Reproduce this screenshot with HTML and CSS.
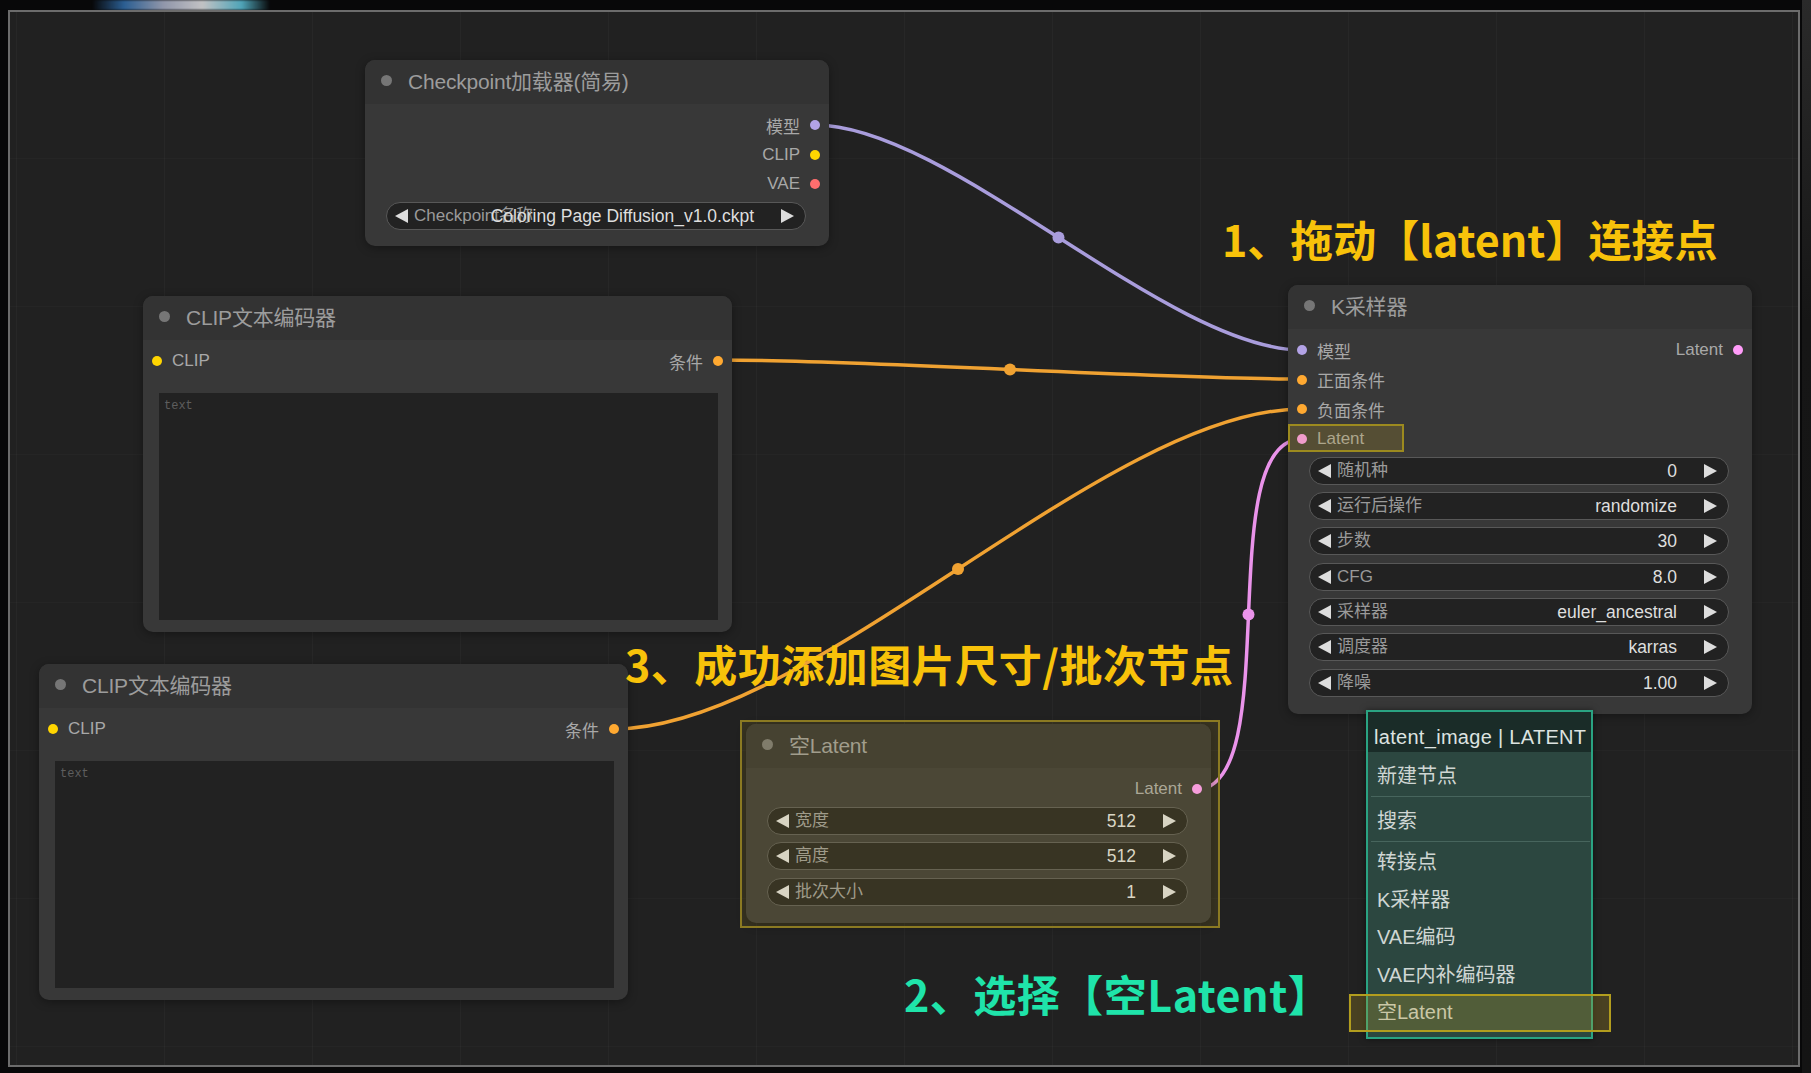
FILE: index.html
```html
<!DOCTYPE html>
<html lang="zh-CN">
<head>
<meta charset="utf-8">
<title>ComfyUI - 空Latent</title>
<link rel="stylesheet" href="styles.css">
</head>
<body>
<div class="screen">
  <div class="glow"></div>
  <div class="side-strip"></div>
  <div class="canvas">
    <svg class="wires" viewBox="8 10 1792 1057" width="1792" height="1057">
      <path class="w-model" d="M815 125 C949 125 1168 350 1302 350"/>
      <path class="w-cond" d="M718 360 C864 360 1156 379 1302 379"/>
      <path class="w-cond" d="M614 729 C811 729 1105 409 1302 409"/>
      <path class="w-latent" d="M1195 790 C1287 790 1210 439 1302 439"/>
      <circle class="m-model" cx="1058.5" cy="237.5" r="6"/>
      <circle class="m-cond" cx="1010" cy="369.5" r="6"/>
      <circle class="m-cond" cx="958" cy="569" r="6"/>
      <circle class="m-latent" cx="1248.5" cy="614.5" r="6"/>
    </svg>

    <div class="node n-ckpt">
      <div class="node-title"><span class="title-dot"></span>Checkpoint加载器(简易)</div>
      <div class="slots">
        <div class="slot-row end"><div class="slot-out">模型<i class="dot c-model"></i></div></div>
        <div class="slot-row end"><div class="slot-out">CLIP<i class="dot c-clip"></i></div></div>
        <div class="slot-row end"><div class="slot-out">VAE<i class="dot c-vae"></i></div></div>
      </div>
      <div class="widgets">
        <div class="widget"><i class="arr-l"></i><div class="w-body"><span class="w-label">Checkpoint名称</span><span class="w-value">Coloring Page Diffusion_v1.0.ckpt</span></div><i class="arr-r"></i></div>
      </div>
    </div>

    <div class="node clip-node n-clip1">
      <div class="node-title"><span class="title-dot"></span>CLIP文本编码器</div>
      <div class="slots">
        <div class="slot-row"><div class="slot-in"><i class="dot c-clip"></i>CLIP</div><div class="slot-out">条件<i class="dot c-cond"></i></div></div>
      </div>
      <div class="textbox">text</div>
    </div>

    <div class="node clip-node n-clip2">
      <div class="node-title"><span class="title-dot"></span>CLIP文本编码器</div>
      <div class="slots">
        <div class="slot-row"><div class="slot-in"><i class="dot c-clip"></i>CLIP</div><div class="slot-out">条件<i class="dot c-cond"></i></div></div>
      </div>
      <div class="textbox">text</div>
    </div>

    <div class="node n-ksampler">
      <div class="node-title"><span class="title-dot"></span>K采样器</div>
      <div class="slots">
        <div class="slot-row"><div class="slot-in"><i class="dot c-model"></i>模型</div><div class="slot-out">Latent<i class="dot c-latent"></i></div></div>
        <div class="slot-row"><div class="slot-in"><i class="dot c-cond"></i>正面条件</div></div>
        <div class="slot-row"><div class="slot-in"><i class="dot c-cond"></i>负面条件</div></div>
        <div class="slot-row"><div class="slot-in"><i class="dot c-latent"></i>Latent</div></div>
      </div>
      <div class="widgets">
        <div class="widget"><i class="arr-l"></i><div class="w-body"><span class="w-label">随机种</span><span class="w-value">0</span></div><i class="arr-r"></i></div>
        <div class="widget"><i class="arr-l"></i><div class="w-body"><span class="w-label">运行后操作</span><span class="w-value">randomize</span></div><i class="arr-r"></i></div>
        <div class="widget"><i class="arr-l"></i><div class="w-body"><span class="w-label">步数</span><span class="w-value">30</span></div><i class="arr-r"></i></div>
        <div class="widget"><i class="arr-l"></i><div class="w-body"><span class="w-label">CFG</span><span class="w-value">8.0</span></div><i class="arr-r"></i></div>
        <div class="widget"><i class="arr-l"></i><div class="w-body"><span class="w-label">采样器</span><span class="w-value">euler_ancestral</span></div><i class="arr-r"></i></div>
        <div class="widget"><i class="arr-l"></i><div class="w-body"><span class="w-label">调度器</span><span class="w-value">karras</span></div><i class="arr-r"></i></div>
        <div class="widget"><i class="arr-l"></i><div class="w-body"><span class="w-label">降噪</span><span class="w-value">1.00</span></div><i class="arr-r"></i></div>
      </div>
    </div>

    <div class="node n-latent">
      <div class="node-title"><span class="title-dot"></span>空Latent</div>
      <div class="slots">
        <div class="slot-row end"><div class="slot-out">Latent<i class="dot c-latent"></i></div></div>
      </div>
      <div class="widgets">
        <div class="widget"><i class="arr-l"></i><div class="w-body"><span class="w-label">宽度</span><span class="w-value">512</span></div><i class="arr-r"></i></div>
        <div class="widget"><i class="arr-l"></i><div class="w-body"><span class="w-label">高度</span><span class="w-value">512</span></div><i class="arr-r"></i></div>
        <div class="widget"><i class="arr-l"></i><div class="w-body"><span class="w-label">批次大小</span><span class="w-value">1</span></div><i class="arr-r"></i></div>
      </div>
    </div>

    <div class="menu">
      <div class="menu-head">latent_image | LATENT</div>
      <div class="menu-item sep">新建节点</div>
      <div class="menu-item sep">搜索</div>
      <div class="menu-item">转接点</div>
      <div class="menu-item">K采样器</div>
      <div class="menu-item">VAE编码</div>
      <div class="menu-item">VAE内补编码器</div>
      <div class="menu-item">空Latent</div>
    </div>

    <div class="mark mark-latent-node"></div>
    <div class="mark mark-latent-slot"></div>
    <div class="mark mark-menu"></div>

    <div class="note note-1">1、拖动【latent】连接点</div>
    <div class="note note-3">3、成功添加图片尺寸/批次节点</div>
    <div class="note note-2">2、选择【空Latent】</div>
  </div>
</div>
</body>
</html>
```

FILE: styles.css
```css
* { box-sizing: border-box; }

html, body {
  margin: 0;
  padding: 0;
  background: #070708;
}

.screen {
  position: relative;
  width: 1811px;
  height: 1073px;
  overflow: hidden;
  background: #080809;
  font-family: "Liberation Sans", "Noto Sans CJK SC", sans-serif;
}

.glow {
  position: absolute;
  left: 92px;
  top: 0;
  width: 178px;
  height: 10px;
  background: linear-gradient(90deg, rgba(20,40,80,0) 0%, #2b5e92 18%, #9096aa 40%, #c2c2c4 62%, #4fa4b8 84%, rgba(20,60,80,0) 100%);
  filter: blur(1px);
}

.side-strip {
  position: absolute;
  left: 1802px;
  top: 0;
  width: 9px;
  height: 1073px;
  background: linear-gradient(#2a2a2a, #161616 30%, #141414);
}

.canvas {
  position: absolute;
  left: 8px;
  top: 10px;
  width: 1792px;
  height: 1057px;
  background-color: #212121;
  background-image:
    linear-gradient(90deg, rgba(255,255,255,0.028) 1px, transparent 1px),
    linear-gradient(rgba(255,255,255,0.018) 1px, transparent 1px);
  background-size: 148px 148px;
  background-position: 8px 0;
  box-shadow: inset 0 0 0 2px #6c6c6c;
  overflow: hidden;
}

.wires {
  position: absolute;
  left: 0;
  top: 0;
  overflow: visible;
}
.wires path { fill: none; stroke-width: 3.5; stroke-linecap: round; }
.w-model { stroke: #a99ddc; }
.w-cond { stroke: #f0a232; }
.w-latent { stroke: #ea93ea; }
.m-model { fill: #a99ddc; }
.m-cond { fill: #f0a232; }
.m-latent { fill: #ea93ea; }

/* ---------- nodes ---------- */
.node {
  position: absolute;
  display: flex;
  flex-direction: column;
  background: #383838;
  border-radius: 10px;
  box-shadow: 0 2px 10px rgba(0,0,0,0.35);
  color: #a9a9a9;
}

.n-ckpt { left: 357px; top: 50px; width: 464px; padding-bottom: 16px; }
.n-clip1 { left: 135px; top: 286px; width: 589px; height: 336px; }
.n-clip2 { left: 31px; top: 654px; width: 589px; height: 336px; }
.n-ksampler { left: 1280px; top: 275px; width: 464px; padding-bottom: 17px; }
.n-latent { left: 738px; top: 714px; width: 465px; padding-bottom: 17px; }

.node-title {
  height: 44px;
  display: flex;
  align-items: center;
  padding: 0 0 4px 16px;
  background: #333333;
  border-radius: 10px 10px 0 0;
  font-size: 21px;
  color: #9c9c9c;
  letter-spacing: -0.2px;
}
.title-dot {
  width: 11px;
  height: 11px;
  border-radius: 50%;
  background: #767676;
  margin-right: 16px;
  flex: none;
}

.slots {
  padding-top: 6.5px;
  display: flex;
  flex-direction: column;
}
.slot-row {
  height: 29.5px;
  display: flex;
  align-items: center;
  justify-content: space-between;
  font-size: 17px;
  color: #a8a8a8;
}
.slot-row.end { justify-content: flex-end; }
.slot-in {
  display: flex;
  align-items: center;
  gap: 10px;
  padding-left: 9px;
}
.slot-out {
  display: flex;
  align-items: center;
  gap: 10px;
  padding-right: 9px;
}
.dot {
  display: block;
  width: 10px;
  height: 10px;
  border-radius: 50%;
  flex: none;
}
.c-model { background: #b3a3e6; }
.c-clip { background: #ffd500; }
.c-vae { background: #ff6e6e; }
.c-cond { background: #ffa931; }
.c-latent { background: #ff9cf9; }

.widgets {
  margin-top: 3px;
  display: flex;
  flex-direction: column;
  gap: 7.4px;
  padding: 0 23px 0 21px;
}
.widget {
  height: 28px;
  display: flex;
  align-items: center;
  background: #222222;
  border: 1px solid #585858;
  border-radius: 14px;
  padding: 0 11px 0 8px;
  font-size: 17px;
}
.arr-l {
  width: 0;
  height: 0;
  border-top: 7px solid transparent;
  border-bottom: 7px solid transparent;
  border-right: 13px solid #dddddd;
  flex: none;
}
.arr-r {
  width: 0;
  height: 0;
  border-top: 7px solid transparent;
  border-bottom: 7px solid transparent;
  border-left: 13px solid #dddddd;
  flex: none;
}
.w-body {
  flex: 1;
  display: grid;
  align-items: center;
  margin: 0 27px 0 4px;
  min-width: 0;
  height: 26px;
}
.w-label, .w-value {
  grid-area: 1 / 1;
  white-space: nowrap;
  line-height: 26px;
  height: 26px;
}
.w-label { justify-self: start; color: #9a9a9a; margin-left: 2px; }
.w-value { justify-self: end; color: #dedede; font-size: 17.5px; }

.textbox {
  margin: 17px 14px 12px 16px;
  flex: 1;
  background: #222222;
  padding: 6px 5px;
  font-family: "Liberation Mono", monospace;
  font-size: 12px;
  color: #5e5e5e;
}

/* ---------- context menu ---------- */
.menu {
  position: absolute;
  left: 1358px;
  top: 700px;
  width: 227px;
  height: 329px;
  border: 2px solid #2aa382;
  background: #2c4740;
  display: flex;
  flex-direction: column;
  padding: 0 1px 0 3px;
  font-size: 20px;
  color: #cfd6d3;
  box-shadow: 0 0 6px rgba(0,0,0,0.5);
}
.menu-head {
  height: 40px;
  margin: 0 -1px 0 -3px;
  padding: 13px 0 0 6px;
  line-height: 24px;
  background: #1a2c28;
  color: #dde3e0;
  white-space: nowrap;
  letter-spacing: 0.3px;
}
.menu-item {
  height: 37.5px;
  display: flex;
  align-items: center;
  padding-left: 6px;
}
.menu-item.sep {
  height: 45px;
  border-bottom: 1px solid #47655d;
}

/* ---------- annotation overlays ---------- */
.mark {
  position: absolute;
  border: 2px solid #9c8a1f;
  background: rgba(190,160,40,0.14);
  pointer-events: none;
}
.mark-latent-node { left: 732px; top: 710px; width: 480px; height: 208px; border-color: #8b7a22; }
.mark-latent-slot { left: 1280px; top: 414px; width: 116px; height: 28px; background: rgba(190,160,40,0.22); }
.mark-menu { left: 1341px; top: 984px; width: 262px; height: 38px; border-color: #b29d1e; background: rgba(190,160,40,0.26); }

.note {
  position: absolute;
  font-family: "Noto Sans CJK SC", sans-serif;
  font-weight: 700;
  font-size: 43px;
  line-height: 50px;
  letter-spacing: 0.5px;
  white-space: nowrap;
}
.note-1 { left: 1214px; top: 203px; color: #f8c20a; letter-spacing: 0; }
.note-3 { left: 617px; top: 628px; color: #f8c20a; }
.note-2 { left: 896px; top: 958px; color: #1fe4aa; }
```
